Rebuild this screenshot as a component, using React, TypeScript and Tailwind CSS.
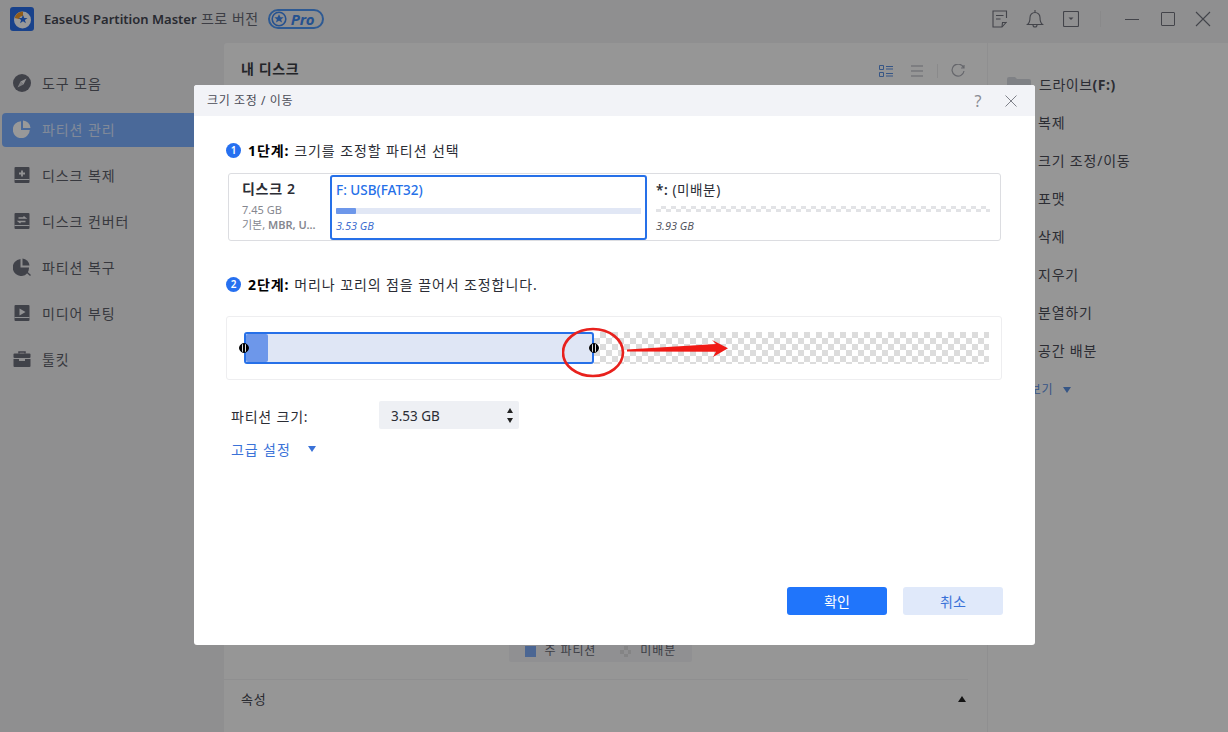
import React, { ReactNode } from 'react';

const fontClass = "font-['Noto_Sans','Noto_Sans_CJK_KR',sans-serif]";

function DriveIcon({ children }: { children: ReactNode }) {
  return (
    <svg width="18" height="18" viewBox="0 0 18 18">
      <path d="M2.5 1h13a1 1 0 0 1 1 1v14a1 1 0 0 1-1 1h-13a1 1 0 0 1-1-1V2a1 1 0 0 1 1-1z" fill="#6c6e7b" />
      <path d="M1.5 13.5h15" stroke="#eef0f4" strokeWidth="1" />
      {children}
    </svg>
  );
}

const sideItems: { label: string; active?: boolean; icon: ReactNode }[] = [
  {
    label: '도구 모음',
    icon: (
      <svg width="18" height="18" viewBox="0 0 18 18">
        <circle cx="9" cy="9" r="9" fill="#6c6e7b" />
        <path d="M13.5 4.5 L10.5 10.5 L7.5 7.5 Z" fill="#f4f4f6" />
        <path d="M4.5 13.5 L7.5 7.5 L10.5 10.5 Z" fill="#f4f4f6" opacity="0.75" />
      </svg>
    ),
  },
  {
    label: '파티션 관리',
    active: true,
    icon: (
      <svg width="18" height="18" viewBox="0 0 18 18">
        <path d="M8 1.2V10h8.8A8.5 8.5 0 1 1 8 1.2z" fill="#fff" />
        <path d="M10 0.5A8 8 0 0 1 17.5 8H10z" fill="#fff" />
      </svg>
    ),
  },
  {
    label: '디스크 복제',
    icon: (
      <DriveIcon>
        <path d="M9 4.5v6M6 7.5h6" stroke="#f4f4f6" strokeWidth="1.8" />
      </DriveIcon>
    ),
  },
  {
    label: '디스크 컨버터',
    icon: (
      <DriveIcon>
        <path d="M5.5 6h7l-2-1.6M12.5 9.5h-7l2 1.6" stroke="#f4f4f6" strokeWidth="1.3" fill="none" />
      </DriveIcon>
    ),
  },
  {
    label: '파티션 복구',
    icon: (
      <svg width="18" height="18" viewBox="0 0 18 18">
        <path d="M7.5 1v8.5H16A8 8 0 0 1 9 18 8.5 8.5 0 1 1 7.5 1z" fill="#6c6e7b" />
        <path d="M9.5 0.5A7.5 7.5 0 0 1 16.5 7.5H9.5z" fill="#6c6e7b" />
        <path d="M11 11.5l6.5 6M11 15v-3.5h3.5" stroke="#6c6e7b" strokeWidth="1.4" fill="none" />
      </svg>
    ),
  },
  {
    label: '미디어 부팅',
    icon: (
      <DriveIcon>
        <path d="M6.5 4.5l6 3.5-6 3.5z" fill="#f4f4f6" />
      </DriveIcon>
    ),
  },
  {
    label: '툴킷',
    icon: (
      <svg width="18" height="18" viewBox="0 0 18 18">
        <path d="M6 3.5V2h6v1.5" stroke="#6c6e7b" strokeWidth="1.5" fill="none" />
        <rect x="0.5" y="3.5" width="17" height="4.5" rx="1" fill="#6c6e7b" />
        <path d="M0.5 9h5.5v2h6V9h5.5v7a1 1 0 0 1-1 1h-15a1 1 0 0 1-1-1z" fill="#6c6e7b" />
      </svg>
    ),
  },
];

const rightItems = ['복제', '크기 조정/이동', '포맷', '삭제', '지우기', '분열하기', '공간 배분'];

function Sidebar() {
  return (
    <div className="flex w-[224px] shrink-0 flex-col gap-[12px] pt-[24px]">
      {sideItems.map((item) => (
        <div
          key={item.label}
          className={`ml-[2px] mr-0 flex h-[34px] items-center gap-[11px] rounded-[4px] pl-[11px] text-[14px] tracking-[0.9px] ${
            item.active ? 'bg-[#7cb0ff] text-[#d8e6ff]' : 'text-[#5c5e68]'
          }`}
        >
          <span className="mb-[2px]">{item.icon}</span>
          <span className="mb-[2px]">{item.label}</span>
        </div>
      ))}
    </div>
  );
}

function Header() {
  return (
    <div className="flex h-[43px] shrink-0 items-center bg-[#eeeef0] pl-[10px] pr-[17px]">
      <svg width="24" height="24" viewBox="0 0 24 24" className="-mt-[5px]">
        <rect width="24" height="24" rx="3" fill="#2a6ee8" />
        <circle cx="12.5" cy="13" r="8.5" fill="#fff" />
        <path d="M4.5 11A8.5 8.5 0 0 1 13 4.5V9a4 4 0 0 0-4 3z" fill="#f09a2a" />
        <path d="M13 8l1.3 3h3.2l-2.6 2 1 3.2-2.9-1.9-2.9 1.9 1-3.2L8.5 11h3.2z" fill="#2a6ee8" />
      </svg>
      <div className="-mt-[5px] ml-[10px] whitespace-nowrap text-[13px] font-semibold text-[#444650]">
        EaseUS Partition Master{' '}
        <span className="ml-[1px] text-[14px] font-normal tracking-[0.5px] text-[#666873]">프로 버전</span>
      </div>
      <div className="-mt-[5px] ml-[9px] flex h-[20px] w-[56px] items-center rounded-full border-2 border-[#4d96f5] pl-[1px]">
        <svg width="16" height="16" viewBox="0 0 16 16">
          <circle cx="8" cy="8" r="6.800" fill="none" stroke="#3f88ee" strokeWidth="1.600" />
          <path d="M8 3.2l1.500 3.100h3.200l-2.600 2.100 1 3.200L8 9.800l-3.100 1.800 1-3.200-2.600-2.100h3.200z" fill="#3f88ee" />
        </svg>
        <span className="ml-[4px] text-[15px] font-bold italic leading-none text-[#3f88ee]">Pro</span>
      </div>
      <div className="-mt-[5px] ml-auto flex items-center text-[#70727c]">
        <svg width="16" height="18" viewBox="0 0 16 18" fill="none" stroke="currentColor" strokeWidth="1.1">
          <path d="M14.5 8V1H1v16h9l4.5-5" />
          <path d="M4 5.5h7.5M4 9h4.5M10 17l.5-4.5h4" />
        </svg>
        <svg width="18" height="20" viewBox="0 0 18 20" fill="none" stroke="currentColor" strokeWidth="1.1" className="ml-[18px]">
          <path d="M1.5 15.5c2-1.5 2.5-3 2.5-7a5 5 0 0 1 10 0c0 4 .5 5.500 2.500 7z" />
          <path d="M7 16a2 2 0 0 0 4 0M9 1v2" />
        </svg>
        <svg width="16" height="16" viewBox="0 0 16 16" fill="none" stroke="currentColor" strokeWidth="1.1" className="ml-[19px]">
          <rect x="0.5" y="0.5" width="15" height="15" rx="1" />
          <path d="M5.500 6.500h5l-2.500 2.500z" fill="currentColor" stroke="none" />
        </svg>
        <div className="ml-[21px] h-[16px] w-px bg-[#e4e4e6]" />
        <div className="ml-[24px] h-px w-[14px] bg-current" />
        <div className="ml-[22px] h-[14px] w-[14px] rounded-[1px] border border-current" />
        <svg width="16" height="16" viewBox="0 0 16 16" stroke="currentColor" strokeWidth="1.1" className="ml-[20px]">
          <path d="M1 1l14 14M15 1L1 15" />
        </svg>
      </div>
    </div>
  );
}

function MainPanel() {
  return (
    <div className="flex min-w-0 flex-1 flex-col rounded-tl-[3px] bg-[#fafafb]">
      <div className="flex h-[50px] items-center pl-[17px] pr-[22px]">
        <span className="mt-[1px] text-[14px] font-semibold tracking-[0.6px] text-[#3a3c44]">내 디스크</span>
        <div className="ml-auto mt-[6px] flex items-center">
          <svg width="14" height="12" viewBox="0 0 14 12" fill="none" stroke="#5b8fe0">
            <path d="M.5.5h4v4h-4zM.5 7.500h4v4h-4zM7 1.500h7M7 4h7M7 8.500h7M7 11h7" />
          </svg>
          <svg width="14" height="12" viewBox="0 0 14 12" stroke="#a9abb3" className="ml-[17px]">
            <path d="M1 1h12M1 6h12M1 11h12" />
          </svg>
          <div className="ml-[13px] h-[14px] w-px bg-[#e6e6e8]" />
          <svg width="14" height="14" viewBox="0 0 14 14" fill="none" stroke="#a9abb3" strokeWidth="1.200" className="ml-[13px]">
            <path d="M12.500 3.500A6 6 0 1 0 13 7M13 1v3h-3" />
          </svg>
        </div>
      </div>
      <div className="mt-auto flex justify-center pr-[47px]">
        <div className="-mr-[36px] flex h-[22px] w-[183px] items-center rounded-[2px] bg-[#f0f0f3] pl-[16px] text-[12px] tracking-[0.9px] text-[#666873]">
          <span className="h-[11px] w-[11px] bg-[#7daaf5]" />
          <span className="ml-[9px]">주 파티션</span>
          <span className="ml-[24px] h-[11px] w-[11px] bg-[repeating-conic-gradient(#dcdcde_0_25%,#f0f0f3_0_50%)] bg-[length:8px_8px]" />
          <span className="ml-[9px]">미배분</span>
        </div>
      </div>
      <div className="mr-[19px] mt-[17px] flex h-[53px] items-start border-t border-[#efeff1] pl-[17px] pr-[2px] pt-[10px] text-[#444650]">
        <span className="text-[13px] tracking-[0.7px]">속성</span>
        <span className="ml-auto mt-[6px] h-0 w-0 border-x-[4px] border-b-[6px] border-x-transparent border-b-[#222]" />
      </div>
    </div>
  );
}

function RightPanel() {
  return (
    <div className="w-[241px] shrink-0 border-l border-[#efeff1] bg-[#fafafb] pl-[19px] pt-[29px] text-[14px] tracking-[0.5px] text-[#4a4c56]">
      <div className="flex h-[24px] items-center gap-[8px]">
        <svg width="24" height="16" viewBox="0 0 24 16">
          <path d="M0 3a2 2 0 0 1 2-2h6l2 2h12a2 2 0 0 1 2 2v9a2 2 0 0 1-2 2H2a2 2 0 0 1-2-2z" fill="#d4d7de" />
        </svg>
        <span>
          드라이브<span className="font-bold">(F:)</span>
        </span>
      </div>
      <div className="mt-[15px] flex flex-col gap-[14px] pl-[31px] tracking-[0.8px]">
        {rightItems.map((t) => (
          <div key={t} className="h-[24px] leading-[24px]">
            {t}
          </div>
        ))}
        <div className="-ml-[24px] mt-px flex h-[24px] items-center gap-[10px] text-[12px] text-[#5b8fe0]">
          <span>더 보기</span>
          <span className="h-0 w-0 border-x-[4px] border-t-[6px] border-x-transparent border-t-[#5b8fe0]" />
        </div>
      </div>
    </div>
  );
}

function StepTitle({ n, bold, children }: { n: number; bold: string; children: ReactNode }) {
  return (
    <div className="flex h-[20px] items-center text-[14px] tracking-[0.9px] text-[#2b2d35]">
      <span className="flex h-[15px] w-[15px] items-center justify-center rounded-full bg-[#2670f0] text-[10px] font-semibold tracking-normal text-white">
        {n}
      </span>
      <span className="ml-[7px] font-bold text-black">{bold}</span>
      <span className="ml-[5px]">{children}</span>
    </div>
  );
}

function Handle() {
  return (
    <span className="absolute top-0 h-[10px] w-[10px] -translate-x-1/2 -translate-y-1/2 rounded-full border-[1.5px] border-black bg-[linear-gradient(90deg,#000_0_25%,#ddd_25%_42%,#000_42%_58%,#ddd_58%_75%,#000_75%)]" />
  );
}

function Dialog() {
  return (
    <div className="absolute left-[194px] top-[85px] flex h-[560px] w-[841px] flex-col rounded-[3px] bg-white">
      <div className="flex h-[31px] shrink-0 items-center rounded-t-[3px] bg-[#f2f3f7] pl-[13px] pr-[18px] text-[12px] tracking-[0.6px] text-[#4a4c56]">
        <span>크기 조정 / 이동</span>
        <span className="ml-auto text-[16px] leading-none text-[#8a8c94]">?</span>
        <svg width="12" height="12" viewBox="0 0 12 12" stroke="#7f8189" className="ml-[23px]">
          <path d="M.5.5l11 11M11.500.5l-11 11" />
        </svg>
      </div>
      <div className="flex min-h-0 flex-1 flex-col px-[32px] pb-[30px] pt-[24px]">
        <StepTitle n={1} bold="1단계:">
          크기를 조정할 파티션 선택
        </StepTitle>
        <div className="ml-[2px] mt-[13px] flex h-[68px] w-[773px] items-center rounded-[3px] border border-[#dcdde1]">
          <div className="-mt-[4px] w-[101px] shrink-0 pl-[13px]">
            <div className="text-[14px] font-semibold leading-[20px] tracking-[0.7px] text-[#2b2d35]">디스크 2</div>
            <div className="mt-[3px] text-[11px] leading-[15px] text-[#85878f]">7.45 GB</div>
            <div className="whitespace-nowrap text-[11px] leading-[15px] text-[#85878f]">
              기본, <span className="font-semibold">MBR, U...</span>
            </div>
          </div>
          <div className="flex h-[65px] w-[317px] shrink-0 flex-col rounded-[3px] border-2 border-[#2670e8] px-[4px] pt-[3px]">
            <div className="text-[13.500px] font-medium leading-[20px] text-[#2670e8]">F: USB(FAT32)</div>
            <div className="mt-[8px] h-[6px] bg-[#e1e7f5]">
              <div className="h-full w-[20px] rounded-[1px] bg-[#6d97ea]" />
            </div>
            <div className="mt-[4px] text-[11px] italic leading-[16px] text-[#3f6fd0]">3.53 GB</div>
          </div>
          <div className="flex min-w-0 flex-1 flex-col pl-[9px] pr-[10px]">
            <div className="text-[13.500px] font-semibold leading-[20px] tracking-[0.6px] text-[#2b2d35]">
              *: <span className="font-normal">(미배분)</span>
            </div>
            <div className="mt-[6px] h-[6px] bg-[repeating-conic-gradient(#e2e3e6_0_25%,#ffffff_0_50%)] bg-[length:10px_6px]" />
            <div className="mt-[6px] text-[11px] italic leading-[16px] text-[#55575f]">3.93 GB</div>
          </div>
        </div>
        <div className="mt-[33px]">
          <StepTitle n={2} bold="2단계:">
            머리나 꼬리의 점을 끌어서 조정합니다.
          </StepTitle>
        </div>
        <div className="relative mt-[22px] flex h-[64px] w-[776px] shrink-0 items-center rounded-[3px] border border-[#eeeef0] pl-[17px] pr-[12px]">
          <div className="relative h-[32px] w-[350px] shrink-0 rounded-[3px] border-2 border-[#2670e8] bg-[#dfe6f5]">
            <div className="h-full w-[22px] rounded-[2px] bg-[#6d97ea]" />
            <span className="absolute left-[-2px] top-1/2"><Handle /></span>
            <span className="absolute left-[348px] top-1/2"><Handle /></span>
          </div>
          <div className="h-[32px] flex-1 bg-[repeating-conic-gradient(#dcdcdc_0_25%,#ffffff_0_50%)] bg-[length:12px_12px]" />
          <svg width="190" height="64" viewBox="0 0 190 64" className="absolute left-[335px] top-0">
            <ellipse cx="31" cy="35.500" rx="30" ry="23.500" fill="none" stroke="#e8211d" strokeWidth="2.600" />
            <path d="M65 32.500L154 27L150 23L166 31.300L151 40L154 34.700L65 34.500Z" fill="#f01a15" />
          </svg>
        </div>
        <div className="mt-[21px] flex h-[28px] items-center text-[14px] text-[#2b2d35]">
          <span className="ml-[5px] w-[148px] pt-[2px] tracking-[0.8px]">파티션 크기:</span>
          <div className="flex h-[28px] w-[140px] items-center rounded-[2px] bg-[#eef0f4] pl-[12px] pr-[6px] text-[13.500px]">
            <span className="pt-[2px]">3.53 GB</span>
            <div className="ml-auto flex flex-col gap-[5px]">
              <span className="h-0 w-0 border-x-[3.500px] border-b-[5px] border-x-transparent border-b-[#222]" />
              <span className="h-0 w-0 border-x-[3.500px] border-t-[5px] border-x-transparent border-t-[#222]" />
            </div>
          </div>
        </div>
        <div className="mt-[10px] flex h-[20px] items-center text-[14px] tracking-[0.9px] text-[#3a72d8]">
          <span className="ml-[5px]">고급 설정</span>
          <span className="ml-[17px] h-0 w-0 border-x-[4px] border-t-[6px] border-x-transparent border-t-[#3a72d8]" />
        </div>
        <div className="mt-auto flex justify-end gap-[16px] text-[14px]">
          <button className="h-[28px] w-[100px] rounded-[3px] bg-[#2075fb] text-white">확인</button>
          <button className="h-[28px] w-[100px] rounded-[3px] bg-[#e0e9fa] text-[#3a72d8]">취소</button>
        </div>
      </div>
    </div>
  );
}

export default function App() {
  return (
    <div className={`relative flex h-[732px] w-[1228px] flex-col overflow-hidden bg-[#eeeef0] ${fontClass}`}>
      <Header />
      <div className="flex min-h-0 flex-1">
        <Sidebar />
        <MainPanel />
        <RightPanel />
      </div>
      <div className="absolute inset-0 bg-black/40" />
      <Dialog />
    </div>
  );
}
